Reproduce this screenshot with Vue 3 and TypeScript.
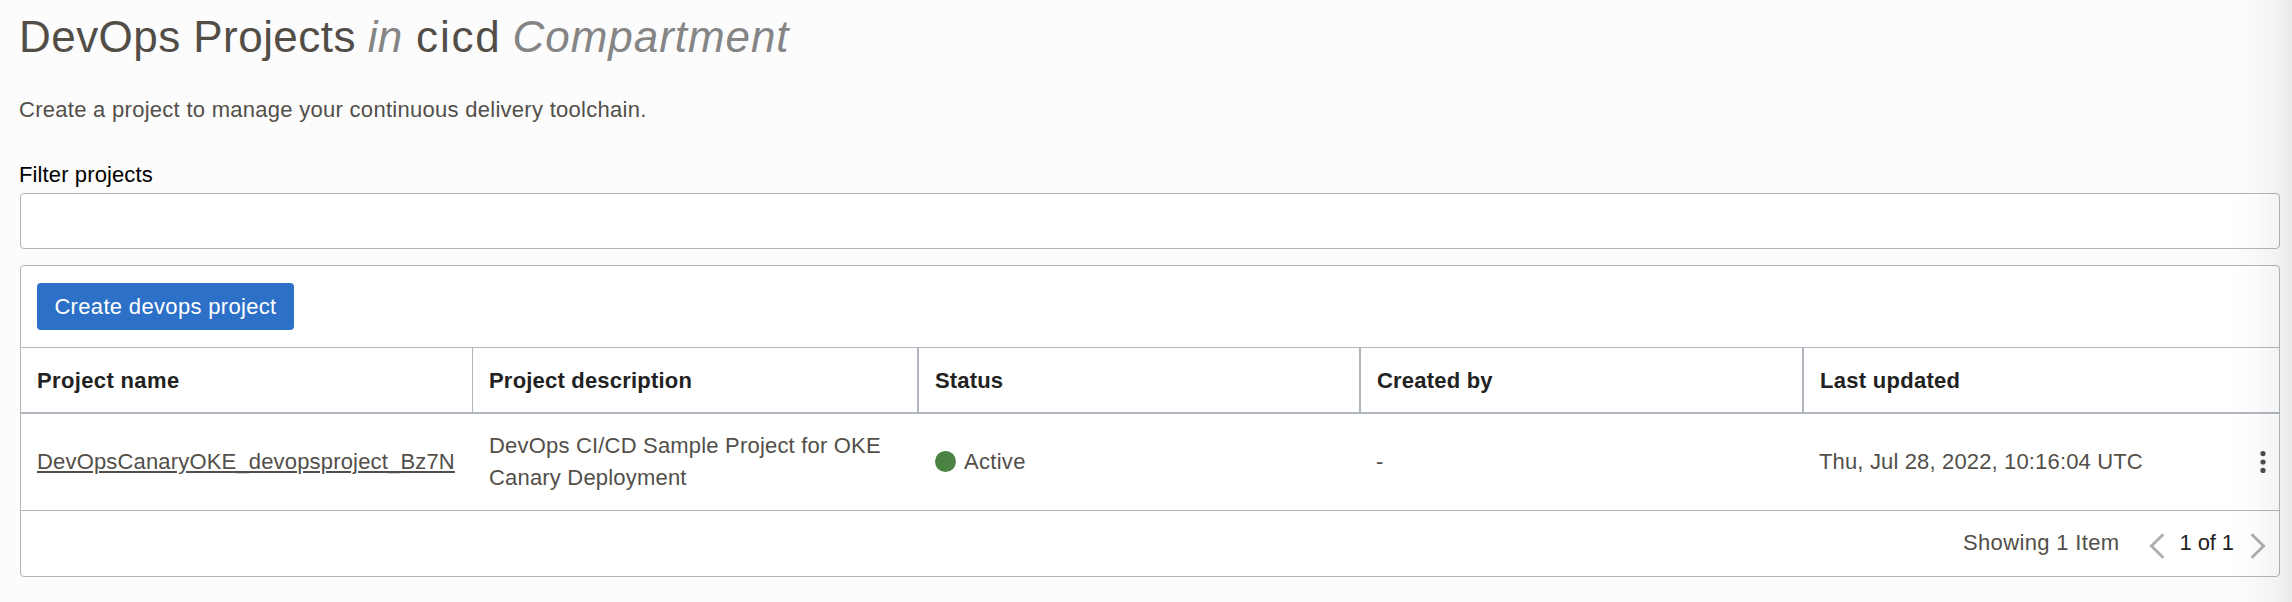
<script setup lang="ts">
interface Project {
  name: string
  description: string
  status: string
  createdBy: string
  updated: string
}

const columns: { key: string; label: string }[] = [
  { key: 'name', label: 'Project name' },
  { key: 'description', label: 'Project description' },
  { key: 'status', label: 'Status' },
  { key: 'created', label: 'Created by' },
  { key: 'updated', label: 'Last updated' },
]

const projects: Project[] = [
  {
    name: 'DevOpsCanaryOKE_devopsproject_Bz7N',
    description: 'DevOps CI/CD Sample Project for OKE Canary Deployment',
    status: 'Active',
    createdBy: '-',
    updated: 'Thu, Jul 28, 2022, 10:16:04 UTC',
  },
]
</script>

<template>
  <main class="page">
    <h1 class="title">
      <span class="title-main">DevOps Projects</span>
      <em class="title-in">in</em>
      <span class="title-name">cicd</span>
      <em class="title-kind">Compartment</em>
    </h1>
    <p class="intro">Create a project to manage your continuous delivery toolchain.</p>

    <label class="filter-label" for="filter">Filter projects</label>
    <input id="filter" class="filter" type="text" />

    <section class="panel">
      <div class="toolbar">
        <button class="create" type="button">Create devops project</button>
      </div>
      <div class="row head">
        <div v-for="c in columns" :key="c.key" class="cell" :class="'head-' + c.key">{{ c.label }}</div>
      </div>
      <div v-for="p in projects" :key="p.name" class="row body">
        <div class="cell"><a class="link">{{ p.name }}</a></div>
        <div class="cell description">{{ p.description }}</div>
        <div class="cell status"><i class="dot"></i>{{ p.status }}</div>
        <div class="cell created">{{ p.createdBy }}</div>
        <div class="cell updated">
          <span>{{ p.updated }}</span>
          <svg class="kebab" width="6" height="24" viewBox="0 0 6 24">
            <circle cx="3" cy="3.6" r="2.6" />
            <circle cx="3" cy="12" r="2.6" />
            <circle cx="3" cy="20.4" r="2.6" />
          </svg>
        </div>
      </div>
      <footer class="footer">
        <span class="showing">Showing 1 Item</span>
        <svg class="chevron" width="16" height="26" viewBox="0 0 16 26">
          <path d="M14.4 1.2 2.4 13l12 11.8" />
        </svg>
        <span class="pages">1 of 1</span>
        <svg class="chevron" width="16" height="26" viewBox="0 0 16 26">
          <path d="M1.6 1.2 13.6 13l-12 11.8" />
        </svg>
      </footer>
    </section>
    <div class="edge-shade"></div>
  </main>
</template>

<style>
body {
  margin: 0;
  background: #fcfcfc;
}
</style>

<style scoped>
.page {
  position: relative;
  box-sizing: border-box;
  width: 2292px;
  height: 602px;
  padding: 12px 12px 0 20px;
  overflow: hidden;
  background: #fcfcfc;
  color: #524f4a;
  font: 22px/32px "Liberation Sans", Arial, sans-serif;
}
.title {
  display: flex;
  margin: 0 0 0 -1px;
  height: 50px;
  font-size: 44px;
  line-height: 50px;
  font-weight: 400;
  color: #524e47;
}
.title em {
  color: #858585;
}
.title-main {
  letter-spacing: 0.45px;
}
.title-in {
  margin-left: 12px;
}
.title-name {
  margin-left: 14px;
  letter-spacing: 1.8px;
}
.title-kind {
  margin-left: 11px;
  letter-spacing: 0.95px;
}
.intro {
  margin: 32px 0 0 -1px;
  letter-spacing: 0.28px;
}
.filter-label {
  display: block;
  margin: 33px 0 0 -1px;
  letter-spacing: 0.12px;
  color: #000;
}
.filter {
  display: block;
  box-sizing: border-box;
  width: 2260px;
  height: 56px;
  margin: 2px 0 16px;
  padding: 0 16px;
  border: 1px solid #b1b5bc;
  border-radius: 4px;
  background: #fff;
  font: inherit;
  outline: none;
}
.panel {
  box-sizing: border-box;
  width: 2260px;
  height: 312px;
  border: 1px solid #b1b5bc;
  border-radius: 4px;
  background: #fff;
}
.toolbar {
  display: flex;
  align-items: center;
  box-sizing: border-box;
  height: 82px;
  padding-left: 16px;
  border-bottom: 1px solid #b1b5bc;
}
.create {
  width: 257px;
  height: 47px;
  padding: 0;
  border: 0;
  border-radius: 4px;
  background: #2d70c7;
  color: #fff;
  font: inherit;
  letter-spacing: 0.33px;
}
.row {
  display: grid;
  grid-template-columns: 452px 446px 442px 443px 1fr;
  box-sizing: border-box;
}
.cell {
  display: flex;
  align-items: center;
  box-sizing: border-box;
  padding-left: 16px;
  letter-spacing: 0.15px;
}
.head {
  height: 66px;
  border-bottom: 2px solid #b1b7bf;
  color: #222;
  font-weight: 700;
}
.head .cell {
  padding-top: 2px;
  border-right: 2px solid #b1b7bf;
}
.head .head-name {
  border-right-width: 1px;
  letter-spacing: 0.36px;
}
.head .head-description {
  letter-spacing: 0.2px;
}
.head .head-created {
  letter-spacing: 0.2px;
}
.head .head-updated {
  border-right: 0;
  letter-spacing: 0.28px;
}
.body {
  height: 97px;
  border-bottom: 1px solid #b1b5bc;
}
.link {
  letter-spacing: 0.17px;
  text-decoration: underline;
  text-decoration-thickness: 2px;
  text-underline-offset: 2px;
}
.body .description {
  padding-right: 30px;
  letter-spacing: 0.19px;
}
.body .status {
  letter-spacing: 0.3px;
}
.body .created,
.body .updated {
  padding-left: 15px;
}
.dot {
  width: 21px;
  height: 21px;
  margin: 0 8px 2px 0;
  border-radius: 50%;
  background: #4a8342;
}
.updated {
  justify-content: space-between;
  padding-right: 13px;
}
.kebab {
  fill: #504e4a;
}
.footer {
  display: flex;
  align-items: center;
  justify-content: flex-end;
  height: 65px;
  padding-right: 13px;
}
.showing {
  letter-spacing: 0.35px;
  margin: 0 29px 2px 0;
}
.pages {
  margin: 0 16px 2px 15px;
  letter-spacing: -0.1px;
  color: #222;
}
.chevron {
  fill: none;
  stroke: #afafaf;
  stroke-width: 3;
  margin-top: 4px;
}
.edge-shade {
  position: absolute;
  top: 0;
  right: 0;
  bottom: 0;
  width: 62px;
  pointer-events: none;
  background: linear-gradient(to right, rgba(0, 0, 0, 0), rgba(0, 0, 0, 0.012) 35%, rgba(0, 0, 0, 0.042) 78%, rgba(0, 0, 0, 0.08));
}
</style>
